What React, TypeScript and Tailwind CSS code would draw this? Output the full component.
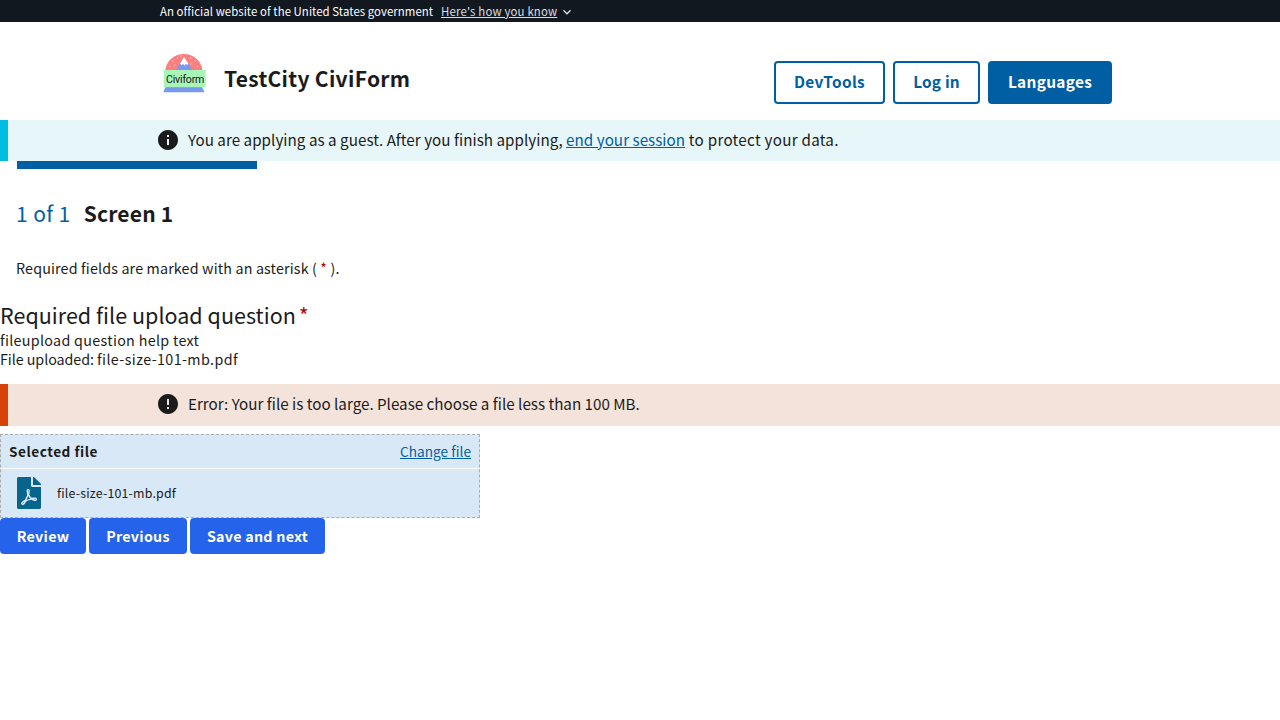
import { MdError, MdExpandMore, MdInfo } from "react-icons/md";
import { FaFilePdf } from "react-icons/fa";

const snow = [[13, 11], [17.5, 7.8], [10, 16.5], [15, 15], [30.5, 8], [31, 14], [35, 11], [37.5, 16.5], [21, 6]];

function Logo() {
  return (
    <svg className="h-12 w-12" viewBox="0 0 48 48">
      <path d="M5.3 20.5C6 11 14 4 23.8 4s17.9 7 18.6 16.5z" fill="#fa8080" />
      <path d="M16 20.5 20.5 12 24 7.2 27.5 12 32.3 20.5z" fill="#7799ee" />
      <path d="M24 7 20 13.8l1.6 1.4 1.5-1.4 1.3 2 1.5-2 1.2 1.4 1.2-1.6z" fill="#fff" />
      <g fill="#fcc9c9">
        {snow.map(([x, y]) => (
          <circle key={`${x}-${y}`} cx={x} cy={y} r="0.65" />
        ))}
      </g>
      <path d="M5.5 37h36.5l2.5 5H3.3z" fill="#7799ee" />
      <path d="M3.5 42.5h41" stroke="#cfdaf8" strokeWidth="0.7" />
      <rect x="3.7" y="20" width="42" height="17.2" fill="#a9f5b8" />
      <text x="6" y="32.7" fontSize="10.6" fill="#151515" textLength="38.4" fontFamily="Roboto, sans-serif">Civiform</text>
    </svg>
  );
}

export default function App() {
  return (
    <div className="min-h-screen bg-white font-['Noto_Sans_CJK_SC',sans-serif] text-[#1b1b1b]">
      <div className="flex h-[22px] items-center bg-[#111820] pl-40 text-[11.4px] leading-[22px] text-white">
        <span className="tracking-[0.055px]">An official website of the United States government</span>
        <a className="ml-2 tracking-[0.17px] text-[#dcdee0] underline">Here's how you know</a>
        <MdExpandMore className="mt-0.5 ml-0.5 size-4 text-[#dcdee0]" />
      </div>
      <header className="flex h-[98px] justify-between pr-[168px] pl-40">
        <div className="flex items-start gap-4 pt-7">
          <Logo />
          <span className="mt-3 text-[21px] leading-8 font-bold tracking-[0.3px]">TestCity CiviForm</span>
        </div>
        <div className="mt-[39px] flex h-[43px] gap-2 text-[15.4px] leading-none font-bold">
          <button className="w-[111px] rounded border-2 border-[#005ea2] pb-0.5 tracking-[0.31px] text-[#005ea2]">DevTools</button>
          <button className="w-[87px] rounded border-2 border-[#005ea2] pb-0.5 tracking-[0.17px] text-[#005ea2]">Log in</button>
          <button className="w-[124px] rounded bg-[#005ea2] pb-0.5 tracking-[0.31px] text-white">Languages</button>
        </div>
      </header>
      <div className="flex h-[41px] items-start border-l-8 border-[#00bde3] bg-[#e7f6f8] pt-2 pl-37 text-[15.2px] leading-6">
        <MdInfo className="mr-2 size-6" />
        <p className="-mt-px tracking-[0.035px]">
          You are applying as a guest. After you finish applying, <a className="text-[#005ea2] underline">end your session</a>
          <span className="tracking-[0.27px]"> to protect your data.</span>
        </p>
      </div>
      <div className="ml-[17px] h-2 w-60 bg-[#005ea2]" />
      <h1 className="mt-7 flex h-8 pl-4 text-[21px] leading-8">
        <span className="tracking-[0.4px] text-[#005ea2]">1 of 1</span>
        <span className="ml-[13px] font-bold tracking-[0.2px]">Screen 1</span>
      </h1>
      <p className="mt-[27px] h-6 pl-4 text-[14.3px] leading-6 tracking-[0.15px]">
        Required fields are marked with an asterisk (<span className="text-[#b50909]"> * </span>).
      </p>
      <h2 className="mt-[19px] h-8 text-[21.5px] leading-8 tracking-[0.03px]">
        Required file upload question<span className="ml-[3px] text-[#b50909]">*</span>
      </h2>
      <div className="-mt-px h-[54px] text-[14.3px] leading-[19px]">
        <p className="tracking-[0.31px]">fileupload question help text</p>
        <p>
          <span className="tracking-[-0.06px]">File uploaded: </span>
          <span className="tracking-[0.4px]">file-size-101-mb.pdf</span>
        </p>
      </div>
      <div className="flex h-[42px] items-start border-l-8 border-[#d54309] bg-[#f4e3db] pt-2 pl-37 text-[15.2px] leading-6">
        <MdError className="mr-2 size-6" />
        <p className="-mt-px">Error: Your file is too large. Please choose a file less than 100 MB.</p>
      </div>
      <div className="mt-2 h-[84px] w-[480px] border border-dashed border-[#a9aeb1] bg-[#d9e8f6]">
        <div className="flex h-[33px] items-center justify-between px-2 text-[13.6px]">
          <span className="font-bold tracking-[0.52px]">Selected file</span>
          <a className="tracking-[0.05px] text-[#005ea2] underline">Change file</a>
        </div>
        <div className="flex h-[49px] items-center border-t border-white pl-4 text-[12.4px]">
          <FaFilePdf className="mr-4 h-8 w-6 text-[#07648d]" />
          <span className="tracking-[0.19px]">file-size-101-mb.pdf</span>
        </div>
      </div>
      <div className="flex h-9 gap-[3px] text-[14.3px] leading-none font-bold tracking-[0.25px] text-white">
        <button className="w-[86px] rounded bg-[#2563eb]">Review</button>
        <button className="w-[98px] rounded bg-[#2563eb]">Previous</button>
        <button className="w-[135px] rounded bg-[#2563eb]">Save and next</button>
      </div>
    </div>
  );
}
